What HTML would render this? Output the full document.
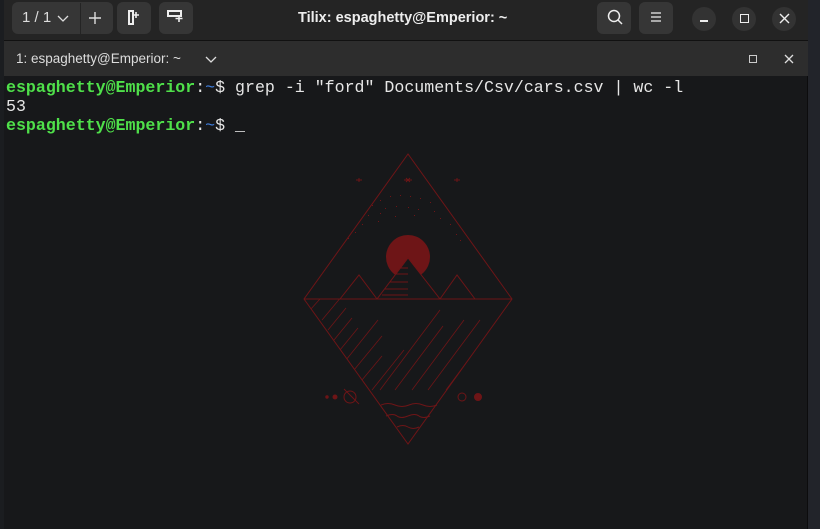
<!DOCTYPE html>
<html><head><meta charset="utf-8"><style>
*{margin:0;padding:0;box-sizing:border-box}
body{width:820px;height:529px;overflow:hidden;background:#22242a;position:relative;font-family:"Liberation Sans",sans-serif}
#strip{position:absolute;left:0;top:0;width:4px;height:529px;background:#1b1d20}
#win{position:absolute;left:4px;top:0;width:804px;height:529px;background:#17181a;border-right:1px solid #0c0c0d}
#title{position:absolute;left:0;top:0;width:804px;height:41px;background:#242424;border-bottom:1px solid #111}
.btn{position:absolute;top:2px;height:32px;background:#363636;border-radius:6px}
.rb{position:absolute;top:7px;width:24px;height:24px;border-radius:12px;background:#333}
#tab{position:absolute;left:0;top:41px;width:804px;height:35px;background:#2d2d2d}
#term{position:absolute;left:2px;top:78px;font-family:"Liberation Mono",monospace;font-size:16.6px;line-height:19px;color:#e6e6e6;white-space:pre}
.g{color:#4fe04a;font-weight:bold}.b{color:#3f7fe0}
</style></head><body>
<div id="strip"></div>
<div id="win">
<div id="title">
 <div class="btn" style="left:8px;width:101px"></div>
 <div style="position:absolute;left:76px;top:3px;width:1px;height:32px;background:#242424"></div>
 <div style="position:absolute;left:18px;top:9px;color:#ddd;font-size:15px">1 / 1</div>
 <svg style="position:absolute;left:53px;top:13px" width="12" height="10"><path d="M1 3l5 5 5-5" stroke="#ddd" fill="none" stroke-width="1.3"/></svg>
 <svg style="position:absolute;left:84px;top:11px" width="14" height="14"><path d="M7 1v12M1 7h12" stroke="#ddd" stroke-width="1.4"/></svg>
 <div class="btn" style="left:113px;width:34px"></div>
 <svg style="position:absolute;left:122px;top:9px" width="16" height="18"><path d="M3 2h4v13h-4z" stroke="#eee" fill="none" stroke-width="2"/><path d="M10 3v6M7 6h6" stroke="#eee" stroke-width="1.6"/></svg>
 <div class="btn" style="left:155px;width:34px"></div>
 <svg style="position:absolute;left:162px;top:9px" width="20" height="16"><path d="M2 2h13v5h-13z" stroke="#eee" fill="none" stroke-width="2"/><path d="M13 6v7M9.5 9.5h7" stroke="#eee" stroke-width="1.6"/></svg>
 <div style="position:absolute;left:294px;top:10px;color:#eee;font-size:14.5px;font-weight:bold">Tilix: espaghetty@Emperior: ~</div>
 <div class="btn" style="left:593px;width:34px"></div>
 <svg style="position:absolute;left:602px;top:8px" width="18" height="18"><circle cx="8" cy="8" r="5.5" stroke="#eee" fill="none" stroke-width="1.5"/><path d="M12 12l4 4" stroke="#eee" stroke-width="1.5"/></svg>
 <div class="btn" style="left:635px;width:34px"></div>
 <svg style="position:absolute;left:645px;top:10px" width="14" height="14"><path d="M2 3h10M2 7h10M2 11h10" stroke="#eee" stroke-width="1.3"/></svg>
 <div class="rb" style="left:688px"></div><div style="position:absolute;left:696px;top:20px;width:8px;height:1.5px;background:#eee"></div>
 <div class="rb" style="left:728px"></div><div style="position:absolute;left:736px;top:14px;width:9px;height:9px;border:1.5px solid #eee"></div>
 <div class="rb" style="left:768px"></div>
 <svg style="position:absolute;left:775px;top:13px" width="11" height="11"><path d="M1 1l9 9M10 1l-9 9" stroke="#eee" stroke-width="1.4"/></svg>
</div>
<div id="tab">
 <div style="position:absolute;left:12px;top:10px;color:#ddd;font-size:13.5px">1: espaghetty@Emperior: ~</div>
 <svg style="position:absolute;left:201px;top:15px" width="12" height="8"><path d="M1 1l5 5 5-5" stroke="#ddd" fill="none" stroke-width="1.3"/></svg>
 <div style="position:absolute;left:745px;top:14px;width:8px;height:8px;border:1px solid #ccc"></div>
 <svg style="position:absolute;left:780px;top:13px" width="10" height="10"><path d="M1 1l8 8M9 1l-8 8" stroke="#ddd" stroke-width="1.3"/></svg>
</div>
<div id="term"><span class="g">espaghetty@Emperior</span>:<span class="b">~</span>$ grep -i "ford" Documents/Csv/cars.csv | wc -l
53
<span class="g">espaghetty@Emperior</span>:<span class="b">~</span>$ _</div>
<svg style="position:absolute;left:0;top:0" width="804" height="529"><defs><clipPath id="c"><path d="M304 299H512L408 444Z"/></clipPath></defs><g transform="translate(-4,0)" stroke="#6e1517" fill="none" stroke-width="1">
<path d="M408 154L304 299L408 444L512 299Z"/><path d="M304 299H512"/>
<circle cx="408" cy="257" r="22" fill="#6e1517" stroke="none"/>
<path d="M377 299L408 258L440 299Z" fill="#17181a"/>
<path d="M340 299L359 275L377 299M440 299L457 275L475 299"/>
<path d="M390 282h18M385 289h23M382 295h26M396 274h12M400 268h8"/>
<g clip-path="url(#c)" stroke-width="0.8"><path d="M310 310l10-11M322 320l20-24M328 330l18-22M334 340l18-22M340 350l18-22M346 360l32-40M354 370l28-34M362 380l20-24M372 390l32-40M380 390l60-80M395 390l48-64M412 390l52-70M428 390l52-70M446 390l52-70M460 390l50-70"/></g>
<path d="M381 405q7-3 14 0t14 0t14 0t14 0M386 416q7-3 11 0t11 0t11 0t11 0M397 427q6-3 11 0t11 0"/>
<circle cx="350" cy="397" r="6"/><path d="M344 389l15 15"/><circle cx="462" cy="397" r="4"/>
<circle cx="478" cy="397" r="3.5" fill="#6e1517"/><circle cx="335" cy="397" r="2" fill="#6e1517"/><circle cx="327" cy="397" r="1.2" fill="#6e1517"/>
<path d="M356 180h6M359 178v4M454 180h6M457 178v4M404 180h8M406 178l4 4M410 178l-4 4"/>
</g><g fill="#6e1517" transform="translate(-4,0)">
<rect x="380" y="200" width="1" height="1"/><rect x="390" y="196" width="1" height="1"/><rect x="400" y="195" width="1" height="1"/><rect x="410" y="196" width="1" height="1"/><rect x="420" y="198" width="1" height="1"/><rect x="430" y="202" width="1" height="1"/><rect x="372" y="205" width="1" height="1"/><rect x="385" y="208" width="1" height="1"/><rect x="396" y="206" width="1" height="1"/><rect x="408" y="207" width="1" height="1"/><rect x="418" y="209" width="1" height="1"/><rect x="434" y="211" width="1" height="1"/><rect x="368" y="215" width="1" height="1"/><rect x="380" y="213" width="1" height="1"/><rect x="395" y="216" width="1" height="1"/><rect x="414" y="215" width="1" height="1"/><rect x="440" y="218" width="1" height="1"/><rect x="362" y="224" width="1" height="1"/><rect x="378" y="221" width="1" height="1"/><rect x="450" y="224" width="1" height="1"/><rect x="355" y="232" width="1" height="1"/><rect x="456" y="234" width="1" height="1"/><rect x="348" y="238" width="1" height="1"/><rect x="460" y="240" width="1" height="1"/>
</g></svg>
</div>
</body></html>
